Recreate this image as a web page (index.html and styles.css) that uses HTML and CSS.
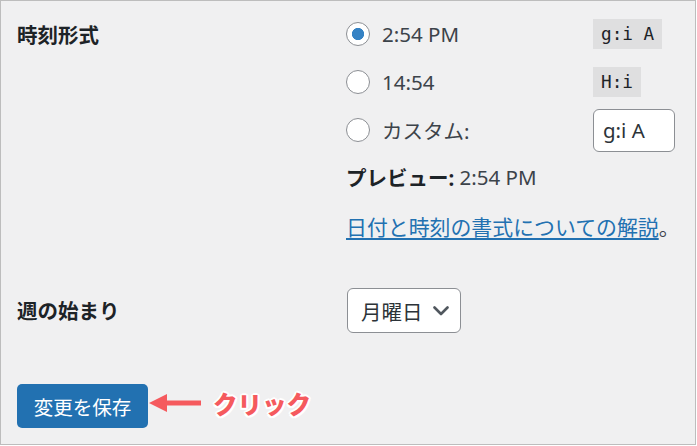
FILE: index.html
```html
<!DOCTYPE html>
<html lang="ja">
<head>
<meta charset="utf-8">
<link rel="stylesheet" href="styles.css">
</head>
<body>
<div class="frame">
  <div class="row row-time">
    <div class="th">時刻形式</div>
    <div class="td">
      <label class="opt"><input type="radio" name="tf" checked><span class="txt">2:54 PM</span><code>g:i A</code></label>
      <label class="opt"><input type="radio" name="tf"><span class="txt">14:54</span><code>H:i</code></label>
      <label class="opt"><input type="radio" name="tf"><span class="txt">カスタム:</span><input class="custom" type="text" value="g:i A"></label>
      <div class="preview"><strong>プレビュー:</strong>&nbsp;2:54 PM</div>
      <div class="doc"><a href="#">日付と時刻の書式についての解説</a>。</div>
    </div>
  </div>
  <div class="row row-week">
    <div class="th">週の始まり</div>
    <div class="select"><span>月曜日</span><svg class="chev" width="16" height="10" viewBox="0 0 16 10"><polyline points="1.5,1.5 8,8 14.5,1.5" fill="none" stroke="#50575e" stroke-width="2.6" stroke-linecap="round" stroke-linejoin="round"/></svg></div>
  </div>
  <div class="row row-submit">
    <button class="save">変更を保存</button>
    <svg class="arrow" width="53" height="20" viewBox="0 0 53 20"><polygon points="0,10 18,1 18,7.5 52,7.5 52,12.5 18,12.5 18,19" fill="#f55a5e"/></svg>
    <span class="click">クリック</span>
  </div>
</div>
</body>
</html>
```
FILE: styles.css
```css
* { box-sizing: border-box; }
html, body { margin: 0; padding: 0; background: #fff; }
body {
  font-family: "Noto Sans", "Noto Sans CJK JP", sans-serif;
  color: #3c434a;
}
.frame {
  width: 696px;
  height: 445px;
  border: 1px solid #bdbdbd;
  background: #f0f0f1;
  padding: 9px 0 0 16px;
}
.row { display: flex; }
.th {
  width: 329px;
  font-weight: 700;
  font-size: 20.5px;
  line-height: 48px;
  color: #1d2327;
  font-family: "Noto Sans CJK JP", sans-serif;
}
.td { display: flex; flex-direction: column; }
.opt {
  height: 48px;
  display: flex;
  align-items: center;
  font-size: 20.5px;
}
.opt input[type="radio"] {
  appearance: none;
  -webkit-appearance: none;
  width: 24px;
  height: 24px;
  margin: 0 12px 0 0;
  border: 1.5px solid #8c8f94;
  border-radius: 50%;
  background: #fff;
}
.opt input[type="radio"]:checked {
  background: radial-gradient(circle, #3582c4 0 5.8px, #fff 6.4px);
}
.txt { width: 211px; }
code {
  font-family: "DejaVu Sans Mono", "Liberation Mono", monospace;
  font-size: 17.7px;
  line-height: 24px;
  padding: 3px 8px;
  background: rgba(0, 0, 0, 0.07);
  color: #1d2327;
}
.custom {
  width: 82px;
  height: 43px;
  margin: 0;
  padding: 0 9px;
  border: 1.5px solid #8c8f94;
  border-radius: 6px;
  background: #fff;
  font-family: "Noto Sans", sans-serif;
  font-size: 20.5px;
  color: #2c3338;
}
.preview {
  height: 46px;
  display: flex;
  align-items: center;
  font-size: 20.5px;
}
.preview strong { color: #1d2327; font-weight: 700; }
.doc {
  height: 48px;
  margin-top: 2px;
  display: flex;
  align-items: center;
  font-size: 20.9px;
}
.doc a { color: #2271b1; text-decoration: underline; text-underline-offset: 3px; text-decoration-thickness: 2px; }
.row-week { margin-top: 38px; align-items: center; }
.row-week .th { line-height: 45px; width: 330px; }
.select {
  width: 114px;
  height: 45px;
  border: 1.5px solid #8c8f94;
  border-radius: 6px;
  background: #fff;
  display: flex;
  align-items: center;
  padding-left: 13px;
  font-size: 20.5px;
  color: #2c3338;
  font-family: "Noto Sans CJK JP", sans-serif;
}
.chev { margin-left: 10px; }
.row-submit { margin-top: 51px; align-items: center; }
.save {
  width: 131px;
  height: 44px;
  border: 0;
  border-radius: 5px;
  background: #2271b1;
  color: #fff;
  font-family: "Noto Sans CJK JP", sans-serif;
  font-size: 19.5px;
  padding: 0;
}
.arrow { margin-left: 1px; margin-bottom: 6px; }
.click {
  margin-left: 11px;
  margin-bottom: 6px;
  font-family: "Noto Sans CJK JP", sans-serif;
  font-weight: 900;
  font-size: 24.5px;
  color: #f55a5e;
  text-shadow: 2px 0 0 #fff, -2px 0 0 #fff, 0 2px 0 #fff, 0 -2px 0 #fff,
    1.5px 1.5px 0 #fff, -1.5px 1.5px 0 #fff, 1.5px -1.5px 0 #fff, -1.5px -1.5px 0 #fff;
}
```
